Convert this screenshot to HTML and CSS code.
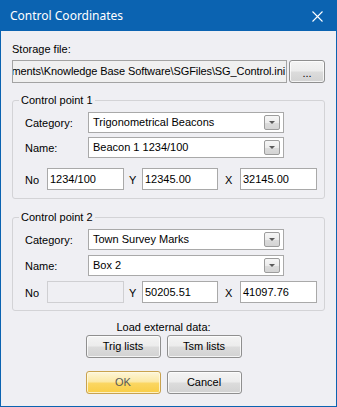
FILE: index.html
```html
<!DOCTYPE html>
<html>
<head>
<meta charset="utf-8">
<link rel="stylesheet" href="styles.css">
</head>
<body>
<div class="window">
  <div class="titlebar">
    <span class="title">Control Coordinates</span>
    <svg class="close" width="11" height="11" viewBox="0 0 11 11"><path d="M0.5 0.5 L10.5 10.5 M10.5 0.5 L0.5 10.5" stroke="#fff" stroke-width="1.1" fill="none"/></svg>
  </div>
  <div class="content">
    <div class="label storage-label">Storage file:</div>
    <div class="storage-row">
      <div class="storage-input"><span>ments\Knowledge Base Software\SGFiles\SG_Control.ini</span></div>
      <div class="btn btn-browse">...</div>
    </div>

    <fieldset class="group group-1">
      <legend>Control point 1</legend>
      <div class="group-body">
        <div class="field-row">
          <span class="label field-label">Category:</span>
          <div class="combo"><span class="combo-text">Trigonometrical Beacons</span><span class="combo-btn"><span class="arrow"></span></span></div>
        </div>
        <div class="field-row">
          <span class="label field-label">Name:</span>
          <div class="combo"><span class="combo-text">Beacon 1 1234/100</span><span class="combo-btn"><span class="arrow"></span></span></div>
        </div>
        <div class="coord-row">
          <span class="label lbl-no">No</span>
          <div class="text-input in-no">1234/100</div>
          <span class="label lbl-y">Y</span>
          <div class="text-input in-y">12345.00</div>
          <span class="label lbl-x">X</span>
          <div class="text-input in-x">32145.00</div>
        </div>
      </div>
    </fieldset>

    <fieldset class="group group-2">
      <legend>Control point 2</legend>
      <div class="group-body">
        <div class="field-row">
          <span class="label field-label">Category:</span>
          <div class="combo"><span class="combo-text">Town Survey Marks</span><span class="combo-btn"><span class="arrow"></span></span></div>
        </div>
        <div class="field-row">
          <span class="label field-label">Name:</span>
          <div class="combo"><span class="combo-text">Box 2</span><span class="combo-btn"><span class="arrow"></span></span></div>
        </div>
        <div class="coord-row">
          <span class="label lbl-no">No</span>
          <div class="text-input in-no disabled"></div>
          <span class="label lbl-y">Y</span>
          <div class="text-input in-y">50205.51</div>
          <span class="label lbl-x">X</span>
          <div class="text-input in-x">41097.76</div>
        </div>
      </div>
    </fieldset>

    <div class="bottom">
      <div class="label load-label">Load external data:</div>
      <div class="btn-row">
        <div class="btn">Trig lists</div>
        <div class="btn">Tsm lists</div>
      </div>
      <div class="btn-row btn-row-2">
        <div class="btn btn-ok">OK</div>
        <div class="btn">Cancel</div>
      </div>
    </div>
  </div>
</div>
</body>
</html>
```

FILE: styles.css
```css
* { box-sizing: border-box; }
html, body { margin: 0; padding: 0; }
body {
  width: 337px;
  height: 407px;
  font-family: "Liberation Sans", Arial, sans-serif;
  font-size: 11px;
  line-height: 13px;
  color: #000;
  background: #f0f0f0;
}
.window {
  width: 337px;
  height: 407px;
  border: 1px solid #0b63b1;
  background: #efeff3;
  display: flex;
  flex-direction: column;
}
.titlebar {
  height: 30px;
  background: #0b63b1;
  color: #fff;
  display: flex;
  align-items: center;
  justify-content: space-between;
  padding: 0 13px 1px 9px;
}
.title {
  font-family: "Noto Sans", "Open Sans", sans-serif;
  font-size: 12px;
  line-height: 16px;
}
.close { display: block; margin-top: 1px; }
.content {
  padding: 12px 10px 0 11px;
  display: flex;
  flex-direction: column;
}
.label { white-space: nowrap; }
.storage-label { height: 13px; }
.storage-row {
  margin-top: 4px;
  display: flex;
  gap: 2px;
  height: 23px;
}
.storage-input {
  width: 275px;
  height: 23px;
  border: 1px solid #a3a3a3;
  background: #f0f0f0;
  overflow: hidden;
  display: flex;
  justify-content: flex-end;
  align-items: center;
  padding: 0 1px 0 2px;
  white-space: nowrap;
  letter-spacing: -0.1px;
}
.btn {
  width: 75px;
  height: 23px;
  border: 1px solid #8f8f8f;
  border-radius: 3px;
  background: linear-gradient(#f4f4f4 0%, #ececec 48%, #dcdcdc 52%, #d2d2d2 100%);
  box-shadow: inset 0 0 0 1px rgba(255,255,255,0.75);
  display: flex;
  align-items: center;
  justify-content: center;
  white-space: nowrap;
}
.btn-browse {
  width: 36px;
  align-items: flex-end;
  padding-bottom: 3px;
  line-height: 11px;
}
.group {
  margin: 11px 0 0 0;
  padding: 0;
  width: 313px;
  border: 1px solid #d3d3d6;
  border-radius: 3px;
  min-inline-size: 0;
}
.group legend {
  margin-left: 6px;
  padding: 0 2px;
  line-height: 13px;
  height: 13px;
}
.group-2 { margin-top: 12px; }
.group-body {
  padding: 5px 0 8px 12px;
  display: flex;
  flex-direction: column;
  gap: 4px;
}
.group-1 .coord-row { margin-top: 6px; }
.group-2 .group-body { gap: 5px; padding-bottom: 7px; }
.field-row {
  display: flex;
  align-items: center;
  height: 21px;
}
.field-label { width: 63px; padding-top: 1px; }
.combo {
  width: 196px;
  height: 21px;
  border: 1px solid #a9a9a9;
  background: #fff;
  display: flex;
  align-items: center;
  justify-content: space-between;
  padding: 0 3px 0 4px;
}
.combo-text { white-space: nowrap; }
.combo-btn {
  width: 16px;
  height: 15px;
  border: 1px solid #9c9c9c;
  border-radius: 2px;
  background: linear-gradient(#f6f6f6 0%, #ececec 50%, #dcdcdc 51%, #d4d4d4 100%);
  display: flex;
  align-items: center;
  justify-content: center;
}
.arrow {
  width: 0;
  height: 0;
  border-left: 3px solid transparent;
  border-right: 3px solid transparent;
  border-top: 3px solid #5a5a5a;
}
.coord-row {
  display: flex;
  align-items: center;
  height: 22px;
}
.coord-row .label { padding-top: 3px; }
.lbl-no { width: 22px; }
.lbl-y { width: 13px; margin-left: 5px; }
.lbl-x { width: 15px; margin-left: 7px; }
.text-input {
  height: 22px;
  border: 1px solid #a9a9a9;
  background: #fff;
  padding: 0 2px;
  display: flex;
  align-items: center;
  white-space: nowrap;
}
.in-no { width: 77px; }
.in-y { width: 76px; }
.in-x { width: 77px; }
.text-input.disabled {
  background: #efeff3;
  border-color: #cfcfd2;
}
.bottom {
  margin-top: 10px;
  margin-left: 73px;
  width: 157px;
  display: flex;
  flex-direction: column;
  align-items: center;
}
.load-label { height: 13px; }
.btn-row {
  margin-top: 1px;
  display: flex;
  gap: 6px;
}
.btn-row-2 { margin-top: 13px; }
.btn-ok {
  border-color: #c9a24e;
  background: linear-gradient(#fdf6d9 0%, #fce9a6 45%, #fbd661 55%, #f9cd45 100%);
  box-shadow: inset 0 0 0 1px rgba(255,250,225,0.8);
  color: #595959;
}
```
